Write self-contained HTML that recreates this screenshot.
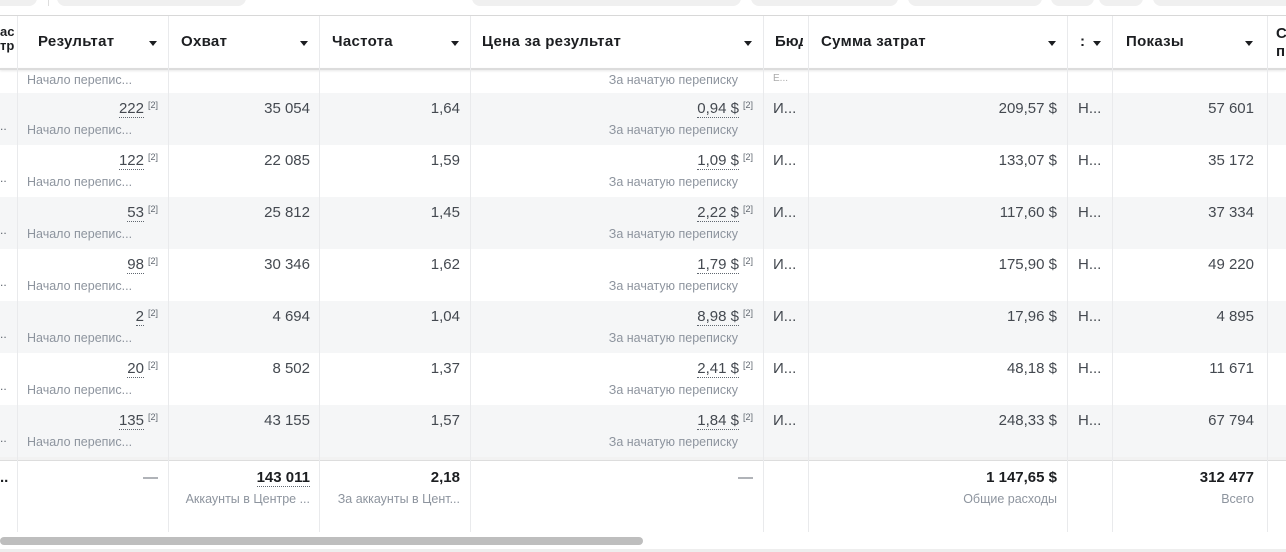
<!DOCTYPE html><html><head><meta charset="utf-8"><style>
*{margin:0;padding:0;box-sizing:border-box}
body{width:1286px;height:552px;overflow:hidden;background:#fff;font-family:"Liberation Sans",Arial,sans-serif;color:#1c1e21;position:relative}
.a{position:absolute}
.pill{position:absolute;top:-10px;height:16px;background:#f0f0f0;border-radius:0 0 8px 8px}
.vl{position:absolute;width:1px;background:#e9eaec}
.h{position:absolute;top:33px;font-size:15px;font-weight:bold;letter-spacing:0.3px;color:#1c1e21;white-space:nowrap}
.car{position:absolute;top:41px;width:0;height:0;border-left:4.5px solid transparent;border-right:4.5px solid transparent;border-top:5px solid #1c1e21}
.r{position:absolute;left:0;width:1286px;height:52px}
.g{background:#f5f6f7}
.v{position:absolute;top:7px;font-size:15px;text-align:right;white-space:nowrap;color:#444950}
.s{position:absolute;top:30px;font-size:12.5px;color:#8d949e;white-space:nowrap}
.d{border-bottom:1px dotted #606770}
sup{font-size:9px;color:#606770;vertical-align:5px;margin-left:4px}
</style></head><body>
<div class="pill" style="left:-10px;width:47px"></div>
<div class="pill" style="left:57px;width:189px"></div>
<div class="a" style="left:48px;top:0;width:1px;height:6px;background:#ddd"></div>
<div class="pill" style="left:472px;width:269px"></div>
<div class="pill" style="left:751px;width:147px"></div>
<div class="pill" style="left:908px;width:134px"></div>
<div class="pill" style="left:1051px;width:43px"></div>
<div class="pill" style="left:1099px;width:44px"></div>
<div class="pill" style="left:1153px;width:140px"></div>
<div class="a" style="left:0;top:15px;width:1286px;height:1px;background:#d8d8d8"></div>
<div class="a" style="left:0;top:68px;width:1286px;height:2px;background:#dcdcdc;box-shadow:0 1px 2px rgba(0,0,0,.1)"></div>
<div class="r" style="top:70px;height:23px"><div class="s" style="left:27px;top:3px">Начало перепис...</div><div class="s" style="right:548px;top:3px">За начатую переписку</div><div class="s" style="left:773px;top:3px;font-size:10px;color:#aaa">Е...</div></div>
<div class="r g" style="top:93px"><div class="v" style="right:1128px"><span class="d">222</span><sup>[2]</sup></div><div class="s" style="left:27px">Начало перепис...</div><div class="v" style="right:976px">35 054</div><div class="v" style="right:826px">1,64</div><div class="v" style="right:533px"><span class="d">0,94 $</span><sup>[2]</sup></div><div class="s" style="right:548px">За начатую переписку</div><div class="v" style="left:773px">И...</div><div class="v" style="right:229px">209,57 $</div><div class="v" style="left:1078px">Н...</div><div class="v" style="right:32px">57 601</div></div>
<div class="r" style="top:145px"><div class="v" style="right:1128px"><span class="d">122</span><sup>[2]</sup></div><div class="s" style="left:27px">Начало перепис...</div><div class="v" style="right:976px">22 085</div><div class="v" style="right:826px">1,59</div><div class="v" style="right:533px"><span class="d">1,09 $</span><sup>[2]</sup></div><div class="s" style="right:548px">За начатую переписку</div><div class="v" style="left:773px">И...</div><div class="v" style="right:229px">133,07 $</div><div class="v" style="left:1078px">Н...</div><div class="v" style="right:32px">35 172</div></div>
<div class="r g" style="top:197px"><div class="v" style="right:1128px"><span class="d">53</span><sup>[2]</sup></div><div class="s" style="left:27px">Начало перепис...</div><div class="v" style="right:976px">25 812</div><div class="v" style="right:826px">1,45</div><div class="v" style="right:533px"><span class="d">2,22 $</span><sup>[2]</sup></div><div class="s" style="right:548px">За начатую переписку</div><div class="v" style="left:773px">И...</div><div class="v" style="right:229px">117,60 $</div><div class="v" style="left:1078px">Н...</div><div class="v" style="right:32px">37 334</div></div>
<div class="r" style="top:249px"><div class="v" style="right:1128px"><span class="d">98</span><sup>[2]</sup></div><div class="s" style="left:27px">Начало перепис...</div><div class="v" style="right:976px">30 346</div><div class="v" style="right:826px">1,62</div><div class="v" style="right:533px"><span class="d">1,79 $</span><sup>[2]</sup></div><div class="s" style="right:548px">За начатую переписку</div><div class="v" style="left:773px">И...</div><div class="v" style="right:229px">175,90 $</div><div class="v" style="left:1078px">Н...</div><div class="v" style="right:32px">49 220</div></div>
<div class="r g" style="top:301px"><div class="v" style="right:1128px"><span class="d">2</span><sup>[2]</sup></div><div class="s" style="left:27px">Начало перепис...</div><div class="v" style="right:976px">4 694</div><div class="v" style="right:826px">1,04</div><div class="v" style="right:533px"><span class="d">8,98 $</span><sup>[2]</sup></div><div class="s" style="right:548px">За начатую переписку</div><div class="v" style="left:773px">И...</div><div class="v" style="right:229px">17,96 $</div><div class="v" style="left:1078px">Н...</div><div class="v" style="right:32px">4 895</div></div>
<div class="r" style="top:353px"><div class="v" style="right:1128px"><span class="d">20</span><sup>[2]</sup></div><div class="s" style="left:27px">Начало перепис...</div><div class="v" style="right:976px">8 502</div><div class="v" style="right:826px">1,37</div><div class="v" style="right:533px"><span class="d">2,41 $</span><sup>[2]</sup></div><div class="s" style="right:548px">За начатую переписку</div><div class="v" style="left:773px">И...</div><div class="v" style="right:229px">48,18 $</div><div class="v" style="left:1078px">Н...</div><div class="v" style="right:32px">11 671</div></div>
<div class="r g" style="top:405px"><div class="v" style="right:1128px"><span class="d">135</span><sup>[2]</sup></div><div class="s" style="left:27px">Начало перепис...</div><div class="v" style="right:976px">43 155</div><div class="v" style="right:826px">1,57</div><div class="v" style="right:533px"><span class="d">1,84 $</span><sup>[2]</sup></div><div class="s" style="right:548px">За начатую переписку</div><div class="v" style="left:773px">И...</div><div class="v" style="right:229px">248,33 $</div><div class="v" style="left:1078px">Н...</div><div class="v" style="right:32px">67 794</div></div>
<div class="a" style="left:0;top:457px;width:1286px;height:4px;background:#f2f2f2;border-bottom:1px solid #ddd"></div>
<div class="a" style="left:0;top:100px;font-size:12px;color:#606770;line-height:52px">..<br>..<br>..<br>..<br>..<br>..<br>..</div>
<div class="r" style="top:462px;height:70px">
<div class="v" style="left:0;font-weight:bold;color:#1c1e21">..</div>
<div class="v" style="right:1128px;color:#606770">—</div>
<div class="v" style="right:976px;font-weight:bold;color:#1c1e21"><span class="d">143 011</span></div><div class="s" style="right:976px">Аккаунты в Центре ...</div>
<div class="v" style="right:826px;font-weight:bold;color:#1c1e21">2,18</div><div class="s" style="right:826px">За аккаунты в Цент...</div>
<div class="v" style="right:533px;color:#606770">—</div>
<div class="v" style="right:229px;font-weight:bold;color:#1c1e21">1 147,65 $</div><div class="s" style="right:229px">Общие расходы</div>
<div class="v" style="right:32px;font-weight:bold;color:#1c1e21">312 477</div><div class="s" style="right:32px">Всего</div>
</div>
<div class="vl" style="left:17px;top:16px;height:516px"></div>
<div class="vl" style="left:168px;top:16px;height:516px"></div>
<div class="vl" style="left:319px;top:16px;height:516px"></div>
<div class="vl" style="left:470px;top:16px;height:516px"></div>
<div class="vl" style="left:763px;top:16px;height:516px"></div>
<div class="vl" style="left:808px;top:16px;height:516px"></div>
<div class="vl" style="left:1067px;top:16px;height:516px"></div>
<div class="vl" style="left:1112px;top:16px;height:516px"></div>
<div class="vl" style="left:1267px;top:16px;height:516px"></div>
<div class="h" style="left:0px;top:25px;font-size:13px;line-height:14px;letter-spacing:0">ас<br>тр</div>
<div class="h" style="left:38px">Результат</div><div class="car" style="left:149px"></div>
<div class="h" style="left:181px">Охват</div><div class="car" style="left:300px"></div>
<div class="h" style="left:332px">Частота</div><div class="car" style="left:451px"></div>
<div class="h" style="left:482px">Цена за результат</div><div class="car" style="left:744px"></div>
<div class="h" style="left:775px;width:28px;overflow:hidden;letter-spacing:0">Бюд</div>
<div class="h" style="left:821px">Сумма затрат</div><div class="car" style="left:1048px"></div>
<div class="h" style="left:1080px">:</div><div class="car" style="left:1093px"></div>
<div class="h" style="left:1126px">Показы</div><div class="car" style="left:1245px"></div>
<div class="h" style="left:1276px;top:25px;line-height:18px">С<br>п</div>
<div class="a" style="left:0;top:537px;width:643px;height:8px;background:#bebebe;border-radius:4px"></div>
<div class="a" style="left:0;top:549px;width:1286px;height:3px;background:#eee"></div>
</body></html>
